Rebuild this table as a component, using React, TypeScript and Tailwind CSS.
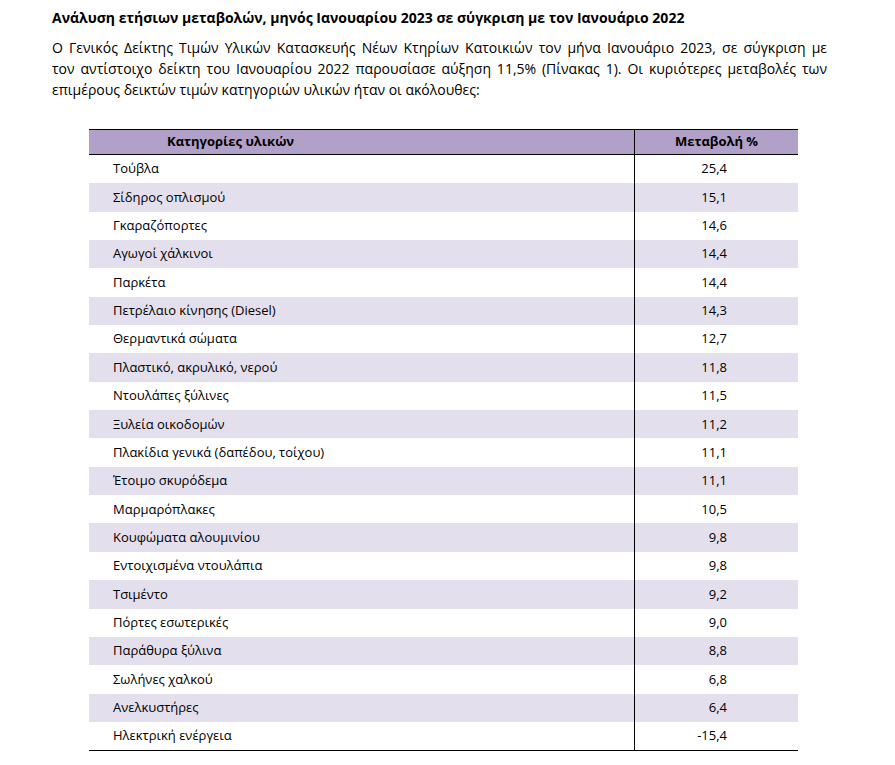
const rows: [string, string][] = [
  ['Τούβλα', '25,4'],
  ['Σίδηρος οπλισμού', '15,1'],
  ['Γκαραζόπορτες', '14,6'],
  ['Αγωγοί χάλκινοι', '14,4'],
  ['Παρκέτα', '14,4'],
  ['Πετρέλαιο κίνησης (Diesel)', '14,3'],
  ['Θερμαντικά σώματα', '12,7'],
  ['Πλαστικό, ακρυλικό, νερού', '11,8'],
  ['Ντουλάπες ξύλινες', '11,5'],
  ['Ξυλεία οικοδομών', '11,2'],
  ['Πλακίδια γενικά (δαπέδου, τοίχου)', '11,1'],
  ['Έτοιμο σκυρόδεμα', '11,1'],
  ['Μαρμαρόπλακες', '10,5'],
  ['Κουφώματα αλουμινίου', '9,8'],
  ['Εντοιχισμένα ντουλάπια', '9,8'],
  ['Τσιμέντο', '9,2'],
  ['Πόρτες εσωτερικές', '9,0'],
  ['Παράθυρα ξύλινα', '8,8'],
  ['Σωλήνες χαλκού', '6,8'],
  ['Ανελκυστήρες', '6,4'],
  ['Ηλεκτρική ενέργεια', '-15,4'],
]

const para = [
  'Ο Γενικός Δείκτης Τιμών Υλικών Κατασκευής Νέων Κτηρίων Κατοικιών τον μήνα Ιανουάριο 2023, σε σύγκριση με',
  'τον αντίστοιχο δείκτη του Ιανουαρίου 2022 παρουσίασε αύξηση 11,5% (Πίνακας 1). Οι κυριότερες μεταβολές των',
]

export default function App() {
  return (
    <div className="w-[895px] h-[765px] bg-white text-black pt-[8px] font-['Open_Sans',sans-serif]">
      <div className="pl-[52px]">
        <h1 className="text-[14px] font-bold leading-[20px]">
          Ανάλυση ετήσιων μεταβολών, μηνός Ιανουαρίου 2023 σε σύγκριση με τον Ιανουάριο 2022
        </h1>
        <div className="mt-[9px] w-[775px] text-[14px] leading-[21px]">
          {para.map((line) => (
            <div key={line} className="text-justify [text-align-last:justify]">
              {line}
            </div>
          ))}
          <div>επιμέρους δεικτών τιμών κατηγοριών υλικών ήταν οι ακόλουθες:</div>
        </div>
      </div>

      <div className="ml-[89px] mt-[29px] w-[709px] text-[13px]">
        <div className="flex h-[26px] bg-[#b1a0c7] border-y-[1.5px] border-black font-bold">
          <div className="w-[545px] pl-[78px] flex items-center">Κατηγορίες υλικών</div>
          <div className="flex-1 border-l border-black flex items-center justify-center">
            Μεταβολή %
          </div>
        </div>
        <div className="border-b-[1.5px] border-black">
          {rows.map(([name, value], i) => (
            <div
              key={name}
              className={`flex h-[28.35px] ${i % 2 === 1 ? 'bg-[#e4dfec]' : 'bg-white'}`}
            >
              <div className="w-[545px] pl-[24px] flex items-center">{name}</div>
              <div className="flex-1 border-l border-black flex items-center justify-end pr-[71px]">
                {value}
              </div>
            </div>
          ))}
        </div>
      </div>
    </div>
  )
}
